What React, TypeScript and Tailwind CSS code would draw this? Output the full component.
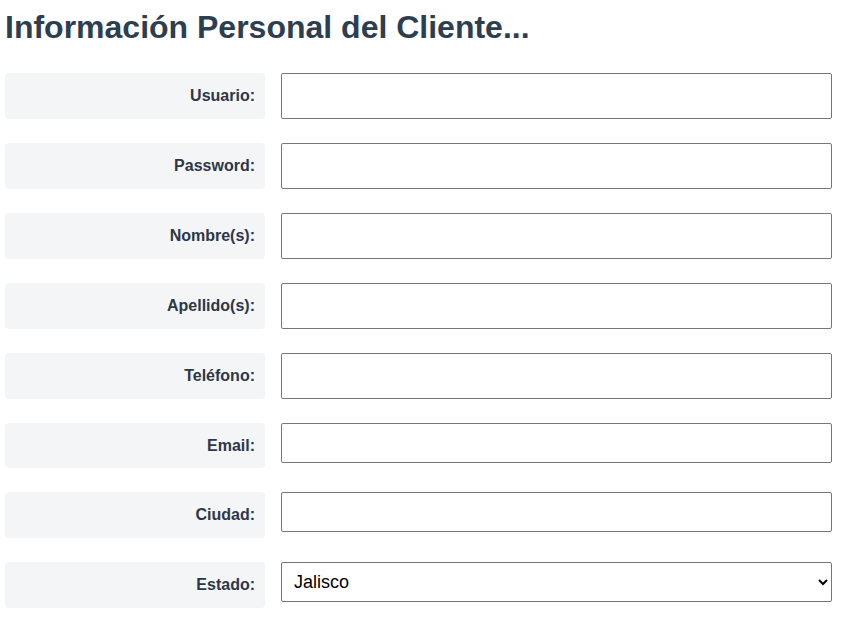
import React from "react";

const fields = [
  { label: "Usuario:", type: "text", box: "h-[46px]", input: "h-[46px]" },
  { label: "Password:", type: "password", box: "h-[46px]", input: "h-[46px]" },
  { label: "Nombre(s):", type: "text", box: "h-[46px]", input: "h-[46px]" },
  { label: "Apellido(s):", type: "text", box: "h-[46px]", input: "h-[46px]" },
  { label: "Teléfono:", type: "tel", box: "h-[46px]", input: "h-[46px]" },
  { label: "Email:", type: "email", box: "h-[45px]", input: "h-[40px]" },
  { label: "Ciudad:", type: "text", box: "h-[46px]", input: "h-[40px]" },
];

function Label({ children, box }: { children: React.ReactNode; box: string }) {
  return (
    <label
      className={`flex w-[260px] shrink-0 items-center justify-end rounded bg-[#f4f5f7] pr-[10px] text-[16px] font-bold text-[#2d3748] ${box}`}
    >
      {children}
    </label>
  );
}

export default function App() {
  return (
    <div
      className="w-[848px] bg-white pl-[5px] pt-[9px]"
      style={{ fontFamily: '"Liberation Sans", Arial, sans-serif' }}
    >
      <h1 className="text-[32px] font-bold leading-[37px] text-[#2c3e50]">
        Información Personal del Cliente...
      </h1>

      <div className="mt-[27px] flex w-[827px] flex-col gap-6">
        {fields.map((f) => (
          <div key={f.label} className="flex items-start gap-4">
            <Label box={f.box}>{f.label}</Label>
            <input
              type={f.type}
              className={`flex-1 rounded-[2px] border border-[#767676] bg-white px-3 text-[18px] text-black outline-none ${f.input}`}
            />
          </div>
        ))}

        <div className="flex items-start gap-4">
          <Label box="h-[46px]">Estado:</Label>
          <select
            defaultValue="Jalisco"
            className="h-[40px] flex-1 rounded-[2px] border border-[#767676] bg-white pl-2 pr-1 text-[18px] text-black"
            style={{ appearance: "auto" }}
          >
            <option>Aguascalientes</option>
            <option>Colima</option>
            <option>Guanajuato</option>
            <option>Jalisco</option>
            <option>Michoacán</option>
            <option>Nayarit</option>
            <option>Zacatecas</option>
          </select>
        </div>
      </div>
    </div>
  );
}
